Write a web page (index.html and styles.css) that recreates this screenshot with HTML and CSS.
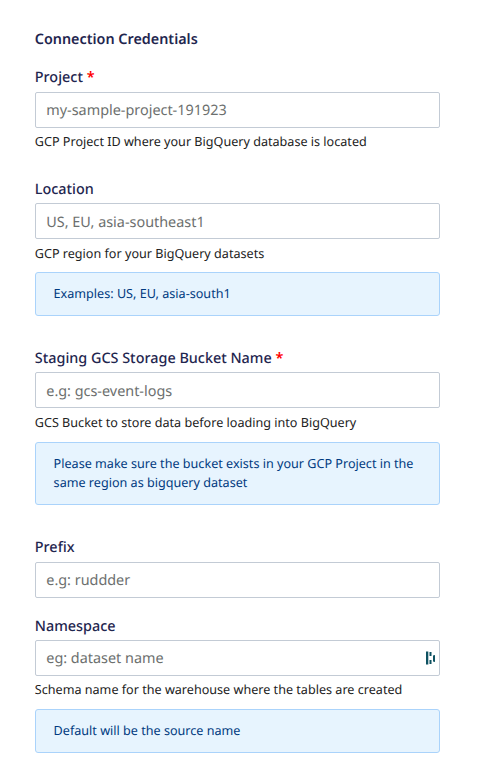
FILE: index.html
```html
<!DOCTYPE html>
<html lang="en">
<head>
<meta charset="utf-8">
<title>Connection Credentials</title>
<link rel="stylesheet" href="styles.css">
</head>
<body>
<form class="form">
  <h1 class="title">Connection Credentials</h1>
  <section class="field project">
    <label class="label" for="project">Project <span class="required">*</span></label>
    <input class="input" id="project" placeholder="my-sample-project-191923">
    <p class="help">GCP Project ID where your BigQuery database is located</p>
  </section>
  <section class="field location">
    <label class="label" for="location">Location</label>
    <input class="input" id="location" placeholder="US, EU, asia-southeast1">
    <p class="help">GCP region for your BigQuery datasets</p>
    <div class="note">Examples: US, EU, asia-south1</div>
  </section>
  <section class="field bucket">
    <label class="label" for="bucket">Staging GCS Storage Bucket Name <span class="required">*</span></label>
    <input class="input" id="bucket" placeholder="e.g: gcs-event-logs">
    <p class="help">GCS Bucket to store data before loading into BigQuery</p>
    <div class="note">Please make sure the bucket exists in your GCP Project in the same region as bigquery dataset</div>
  </section>
  <section class="field prefix">
    <label class="label" for="prefix">Prefix</label>
    <input class="input" id="prefix" placeholder="e.g: ruddder">
  </section>
  <section class="field namespace">
    <label class="label" for="namespace">Namespace</label>
    <div class="control">
      <input class="input" id="namespace" placeholder="eg: dataset name">
      <svg class="badge" viewBox="0 0 10 14" aria-hidden="true"><path d="M0 .5h2.300v13H0zM3.500 1h2v4h-2zM3.500 9h2v4h-2zM7 4.500l2-.5v7l-2-.5z"/></svg>
    </div>
    <p class="help">Schema name for the warehouse where the tables are created</p>
    <div class="note">Default will be the source name</div>
  </section>
</form>
</body>
</html>
```
FILE: styles.css
```css
* { box-sizing: border-box; }
body { margin: 0; background: #fff; font-family: "Noto Sans", sans-serif; text-rendering: geometricPrecision; }
.form { width: 405px; margin-left: 34.8px; padding-top: 29px; }
.title, .label { display: block; margin: 0; color: #1f264f; font-size: 14.4px; font-weight: 600; line-height: 22px; }
.title { margin-bottom: 16px; font-size: 14.35px; }
.label { margin-bottom: 2px; font-weight: 500; }
.project .label, .prefix .label { margin-bottom: 3px; }
.required { color: #f00; font-weight: 600; }
.field { margin-bottom: 32px; }
.project { margin-bottom: 27px; }
.prefix { margin-bottom: 18px; }
.namespace { margin-bottom: 0; }
.input { display: block; width: 100%; height: 36px; padding: 0 10.5px; border: 1px solid #c3cbd5; border-radius: 2px; background: #fff; font: 14.4px "Noto Sans", sans-serif; text-rendering: geometricPrecision; }
.location .input, .bucket .input { padding-top: 2px; }
.input::placeholder { color: #6c6f6e; opacity: 1; }
.help { margin: 4px 0 0; color: #222; font-size: 12.6px; line-height: 20px; }
.location .help, .bucket .help { margin-top: 5px; }
.note { margin-top: 9px; padding: 11px 17.8px 12px; border: 1px solid #aad3fb; border-radius: 3px; background: #e7f4fe; color: #003a80; font-size: 12.6px; line-height: 19px; }
.location .note { margin-top: 8px; }
.control { position: relative; }
.badge { position: absolute; top: 11px; right: 4px; width: 10px; height: 14px; fill: #0e5261; }
```
